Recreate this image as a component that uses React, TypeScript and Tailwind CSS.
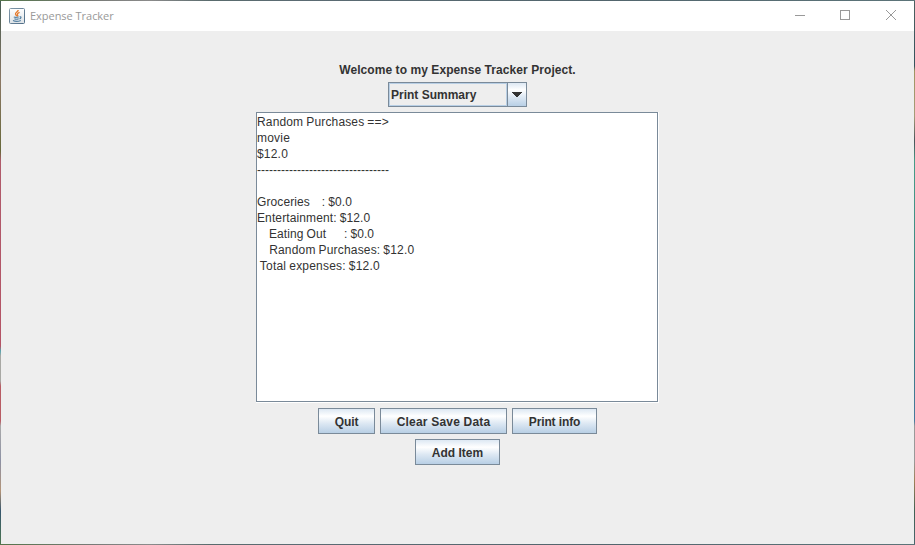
import React from "react";

type Line = { text: string; spacing: string };

const LINES: Line[] = [
  { text: "Random Purchases ==>", spacing: "tracking-[0.15px]" },
  { text: "movie", spacing: "tracking-[0.2px]" },
  { text: "$12.0", spacing: "tracking-[0.2px]" },
  { text: "---------------------------------", spacing: "tracking-[0px]" },
  { text: "", spacing: "tracking-[0px]" },
  { text: "Groceries    : $0.0", spacing: "tracking-[0.1px]" },
  { text: "Entertainment: $12.0", spacing: "tracking-[0.12px]" },
  { text: "    Eating Out      : $0.0", spacing: "tracking-[0.1px]" },
  { text: "    Random Purchases: $12.0", spacing: "tracking-[0.17px]" },
  { text: " Total expenses: $12.0", spacing: "tracking-[0.2px]" },
];

function JavaIcon() {
  return (
    <svg width="16" height="16" viewBox="0 0 16 16" fill="none">
      <defs>
        <linearGradient id="tile" x1="0" y1="0" x2="0" y2="1">
          <stop offset="0" stopColor="#ffffff" />
          <stop offset="1" stopColor="#dde2e6" />
        </linearGradient>
        <linearGradient id="rim" x1="0" y1="0" x2="1" y2="1">
          <stop offset="0" stopColor="#8198aa" />
          <stop offset="1" stopColor="#4f6d87" />
        </linearGradient>
      </defs>
      <rect x="0.5" y="0.5" width="15" height="15" rx="1" fill="url(#tile)" stroke="url(#rim)" />
      <path d="M9.2 2C9.5 3.8 6 4.4 6.5 6.2C6.7 7 7.6 7.4 7.8 8.2M10.6 4.4C8.4 5.3 8 6 8.6 6.8C9.1 7.4 8.8 8 8.2 8.4" stroke="#e57a2c" strokeWidth="1.3" />
      <path d="M4.8 8.9C5.5 9.4 8 9.4 9.8 9M5.4 10.8C6.5 11.3 8.7 11.2 9.7 10.8M10.6 8.9C12.6 8.3 12.4 10.2 10.5 10.9M4 12.6C6 13.5 9.6 13.4 11.8 12.4" stroke="#5580a2" strokeWidth="1.1" />
    </svg>
  );
}

function TitleBar() {
  return (
    <header className="flex h-[30px] shrink-0 items-center bg-white pl-2">
      <JavaIcon />
      <span className="ml-[5px] flex-1 whitespace-pre font-['Open_Sans','Noto_Sans',sans-serif] text-[11px] leading-[16px] tracking-[-0.03px] text-[#999]">
        Expense Tracker
      </span>
      <svg width="120" height="30" viewBox="0 0 120 30" fill="none" stroke="#999" shapeRendering="crispEdges">
        <path d="M1 14.5H11" />
        <rect x="46.5" y="9.5" width="9" height="9" />
        <path d="M92 9L102 19M102 9L92 19" shapeRendering="auto" />
      </svg>
    </header>
  );
}

function MetalButton({ label, size, spacing }: { label: string; size: string; spacing: string }) {
  return (
    <button
      className={`flex h-[26px] items-center justify-center border border-[#7a8a99] bg-[linear-gradient(#dde8f3,#fff_30%,#dde8f3_60%,#b8cfe5)] pt-[2px] font-bold ${size} ${spacing}`}
    >
      {label}
    </button>
  );
}

export default function App() {
  return (
    <div className="h-[545px] w-[915px] bg-[linear-gradient(to_right,#54754a,#777a76_90px,#8b8b8b_150px,#596b6d_210px,#5b6b73_300px,#52656d_600px,#5c7479)] p-px">
      <div className="relative h-[543px] w-[913px]">
        <div className="absolute -left-px top-0 h-full w-px bg-[linear-gradient(to_bottom,#455b52_0,#8b7864_80px,#67683a_150px,#b05b6b_160px,#b45365_345px,#55a6b0_350px,#a8a8a4_355px,#a8a8a4_380px,#b85c64_385px,#b85c64_420px,#aaa_425px,#8d91a4_460px,#b39478_490px,#36566d_510px,#4b7550_543px)]" />
        <div className="absolute -right-px top-0 h-full w-px bg-[linear-gradient(to_bottom,#4c6060_0,#34535d_65px,#a09563_70px,#a69c78_115px,#49555a_140px,#469c87_160px,#397c83_350px,#477b9e_420px,#999_425px,#999_460px,#a08057_480px,#406153_510px,#49666e_543px)]" />
        <div className="flex h-full flex-col bg-[#eee] font-['Liberation_Sans',Arial,sans-serif] text-[12px] leading-[16px] text-[#333]">
          <TitleBar />
          <main className="flex flex-1 flex-col items-center">
            <h1 className="mt-[31px] h-[16px] whitespace-pre font-bold tracking-[0.07px]">Welcome to my Expense Tracker Project.</h1>
            <div className="mt-1 flex h-[25px] w-[139px] border border-[#7a8a99]">
              <div className="flex flex-1 items-center border border-[#b8cfe5] pl-px pt-px font-bold tracking-[0px]">
                Print Summary
              </div>
              <div className="flex w-[19px] items-center justify-center border-l border-[#7a8a99] bg-[linear-gradient(#dde8f3,#fff_30%,#dde8f3_60%,#b8cfe5)]">
                <svg width="10" height="5" viewBox="0 0 10 5" shapeRendering="crispEdges">
                  <path d="M0 0H10V1H9V2H8V3H7V4H6V5H4V4H3V3H2V2H1V1H0Z" fill="#333" />
                </svg>
              </div>
            </div>
            <div className="mt-[5px] h-[291px] w-[403px] border-b border-r border-white">
              <div className="h-[290px] w-[402px] border border-[#7a8a99] bg-white pt-px">
                {LINES.map((line, i) => (
                  <p key={i} className={`h-4 whitespace-pre [word-spacing:-0.46px] ${line.spacing}`}>
                    {line.text}
                  </p>
                ))}
              </div>
            </div>
            <div className="mt-[5px] flex gap-[5px]">
              <MetalButton label="Quit" size="w-[57px]" spacing="tracking-[-0.1px]" />
              <MetalButton label="Clear Save Data" size="w-[127px]" spacing="tracking-[0.2px]" />
              <MetalButton label="Print info" size="w-[85px]" spacing="tracking-[-0.12px]" />
            </div>
            <div className="mt-[5px]">
              <MetalButton label="Add Item" size="w-[85px]" spacing="tracking-[0px]" />
            </div>
          </main>
        </div>
      </div>
    </div>
  );
}
